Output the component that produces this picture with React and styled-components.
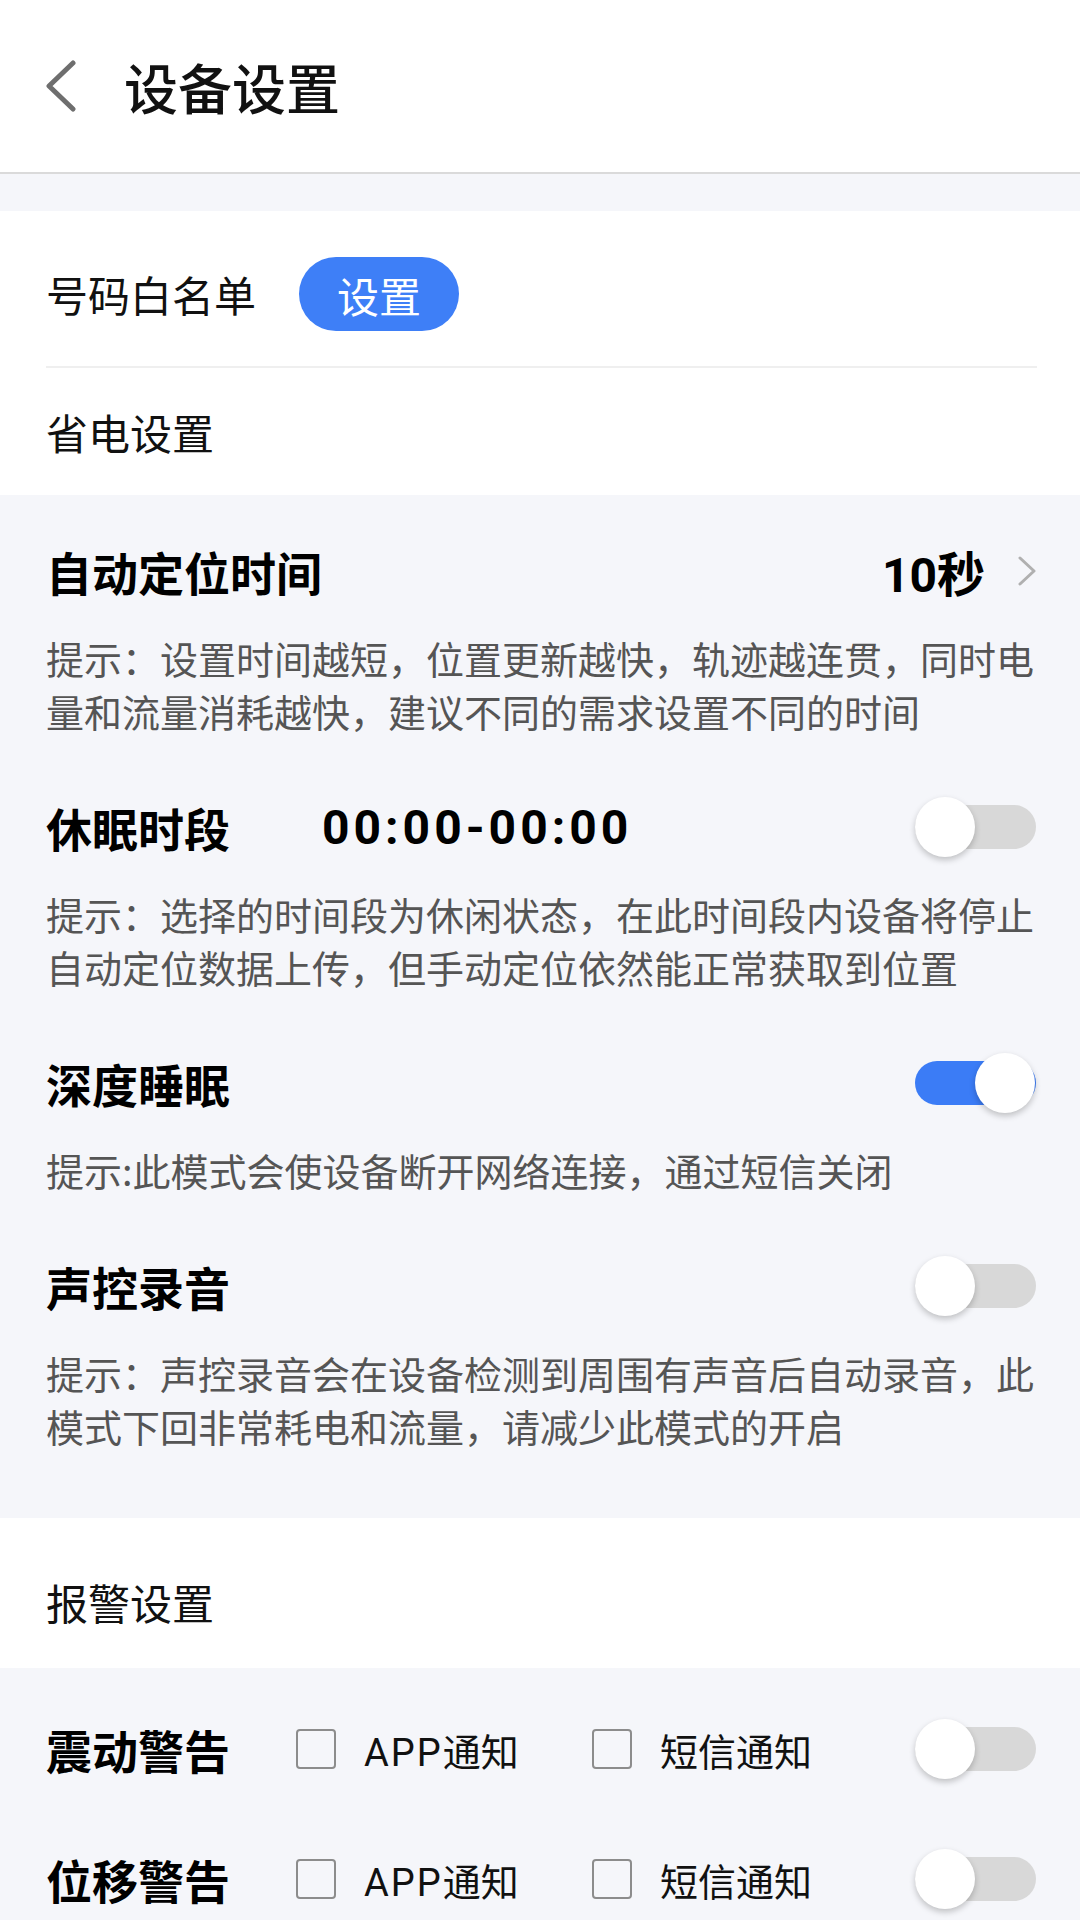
import React from "react";
import styled, {createGlobalStyle} from "styled-components";

const GlobalStyle = createGlobalStyle`
  body {
    margin: 0;
    background: #f5f6fa;
    font-family: "Roboto", "Noto Sans CJK SC", sans-serif;
    color: #111;
  }
`;

const Page = styled.div`
  width: 1080px;
  background: #f5f6fa;
`;

const Header = styled.header`
  height: 172px;
  background: #fff;
  border-bottom: 2px solid #dadada;
  display: flex;
  align-items: center;
  padding-left: 46px;
`;

const HeaderTitle = styled.h1`
  margin: 0 0 0 48px;
  font-family: "Noto Sans CJK SC", sans-serif;
  font-size: 54px;
  font-weight: 500;
  color: #111;
`;

const Gap = styled.div`
  height: 37px;
`;

const WhiteCard = styled.section`
  background: #fff;
  padding: ${p => p.$pad || "0 43px 0 46px"};
`;

const WhitelistRow = styled.div`
  height: 155px;
  box-sizing: border-box;
  padding-top: 11px;
  display: flex;
  align-items: center;
`;

const Label = styled.span`
  font-family: "Noto Sans CJK SC", sans-serif;
  font-size: 42px;
  line-height: 48px;
  color: #111;
`;

const PillButton = styled.button`
  margin-left: 43px;
  width: 160px;
  height: 74px;
  border: none;
  border-radius: 37px;
  background: #3e7ff7;
  color: #fff;
  font-family: "Noto Sans CJK SC", sans-serif;
  font-size: 42px;
  padding: 0;
`;

const Divider = styled.div`
  height: 2px;
  background: #efefef;
`;

const PlainRow = styled.div`
  height: 127px;
  display: flex;
  align-items: center;
`;

const GraySection = styled.section`
  padding: 36px 43px 66px 46px;
  display: flex;
  flex-direction: column;
  gap: 50px;
`;

const Item = styled.div``;

const ItemHead = styled.div`
  height: 80px;
  display: flex;
  align-items: center;
`;

const ItemTitle = styled.span`
  font-family: "Noto Sans CJK SC", sans-serif;
  font-size: 46px;
  font-weight: 700;
  color: #000;
  width: ${p => p.$w || "auto"};
  flex-shrink: 0;
`;

const TimeValue = styled.span`
  font-family: "Roboto", "Noto Sans CJK SC", sans-serif;
  font-size: 48px;
  font-weight: 700;
  color: #000;
  letter-spacing: ${p => p.$spacing || "0"};
  margin-left: ${p => p.$ml || "0"};
`;

const Push = styled.div`
  margin-left: auto;
  display: flex;
  align-items: center;
`;

const Hint = styled.p`
  margin: 20px 0 0;
  font-family: "Noto Sans CJK SC", sans-serif;
  font-size: 38px;
  line-height: 53px;
  color: #555;
`;

const SwitchBox = styled.div`
  position: relative;
  width: 122px;
  height: 60px;
  flex-shrink: 0;
`;

const Track = styled.div`
  position: absolute;
  top: 8px;
  left: 0;
  right: 1px;
  height: 44px;
  border-radius: 22px;
  background: ${p => (p.$on ? "#3b7cf6" : "#d8d8d8")};
`;

const Knob = styled.div`
  position: absolute;
  top: 0;
  ${p => (p.$on ? "right: 2px;" : "left: 0;")}
  width: 60px;
  height: 60px;
  border-radius: 50%;
  background: #fff;
  box-shadow: 0 3px 6px rgba(0, 0, 0, 0.22);
`;

const Toggle = ({on}) => (
    <SwitchBox>
        <Track $on={on}/>
        <Knob $on={on}/>
    </SwitchBox>
);

const AlarmRow = styled.div`
  height: 130px;
  display: flex;
  align-items: center;
`;

const Option = styled.label`
  display: flex;
  align-items: center;
  width: ${p => p.$w};
  flex-shrink: 0;
`;

const Box = styled.span`
  width: 36px;
  height: 36px;
  border: 2px solid #8c8c8c;
  border-radius: 4px;
  margin-right: 28px;
  flex-shrink: 0;
`;

const OptionText = styled.span`
  font-family: "Roboto", "Noto Sans CJK SC", sans-serif;
  font-size: 38px;
  color: #111;
`;

const Latin = styled.span`
  letter-spacing: 2px;
`;

const AlarmList = styled.section`
  padding: 16px 43px 0 46px;
`;

const BackIcon = () => (
    <svg width="30" height="52" viewBox="0 0 30 52">
        <polyline points="27,3 3,26 27,49" fill="none" stroke="#6e6e6e" strokeWidth="5"
                  strokeLinecap="round" strokeLinejoin="round"/>
    </svg>
);

const Arrow = () => (
    <svg width="20" height="30" viewBox="0 0 20 30" style={{marginLeft: 32}}>
        <polyline points="3,2 17,15 3,28" fill="none" stroke="#b0b0b0" strokeWidth="3"
                  strokeLinecap="round" strokeLinejoin="round"/>
    </svg>
);

const alarms = ["震动警告", "位移警告"];

export default function App() {
    return (
        <Page>
            <GlobalStyle/>
            <Header>
                <BackIcon/>
                <HeaderTitle>设备设置</HeaderTitle>
            </Header>
            <Gap/>
            <WhiteCard>
                <WhitelistRow>
                    <Label>号码白名单</Label>
                    <PillButton>设置</PillButton>
                </WhitelistRow>
                <Divider/>
                <PlainRow>
                    <Label>省电设置</Label>
                </PlainRow>
            </WhiteCard>
            <GraySection>
                <Item>
                    <ItemHead>
                        <ItemTitle>自动定位时间</ItemTitle>
                        <Push>
                            <TimeValue>10秒</TimeValue>
                            <Arrow/>
                        </Push>
                    </ItemHead>
                    <Hint>提示：设置时间越短，位置更新越快，轨迹越连贯，同时电量和流量消耗越快，建议不同的需求设置不同的时间</Hint>
                </Item>
                <Item>
                    <ItemHead>
                        <ItemTitle>休眠时段</ItemTitle>
                        <TimeValue $ml="92px" $spacing="4px">00:00-00:00</TimeValue>
                        <Push><Toggle/></Push>
                    </ItemHead>
                    <Hint>提示：选择的时间段为休闲状态，在此时间段内设备将停止自动定位数据上传，但手动定位依然能正常获取到位置</Hint>
                </Item>
                <Item>
                    <ItemHead>
                        <ItemTitle>深度睡眠</ItemTitle>
                        <Push><Toggle on/></Push>
                    </ItemHead>
                    <Hint>提示:此模式会使设备断开网络连接，通过短信关闭</Hint>
                </Item>
                <Item>
                    <ItemHead>
                        <ItemTitle>声控录音</ItemTitle>
                        <Push><Toggle/></Push>
                    </ItemHead>
                    <Hint>提示：声控录音会在设备检测到周围有声音后自动录音，此模式下回非常耗电和流量，请减少此模式的开启</Hint>
                </Item>
            </GraySection>
            <WhiteCard $pad="60px 43px 42px 46px">
                <Label>报警设置</Label>
            </WhiteCard>
            <AlarmList>
                {alarms.map(name => (
                    <AlarmRow key={name}>
                        <ItemTitle $w="250px">{name}</ItemTitle>
                        <Option $w="296px">
                            <Box/>
                            <OptionText><Latin>APP</Latin>通知</OptionText>
                        </Option>
                        <Option $w="auto">
                            <Box/>
                            <OptionText>短信通知</OptionText>
                        </Option>
                        <Push><Toggle/></Push>
                    </AlarmRow>
                ))}
            </AlarmList>
        </Page>
    );
}
